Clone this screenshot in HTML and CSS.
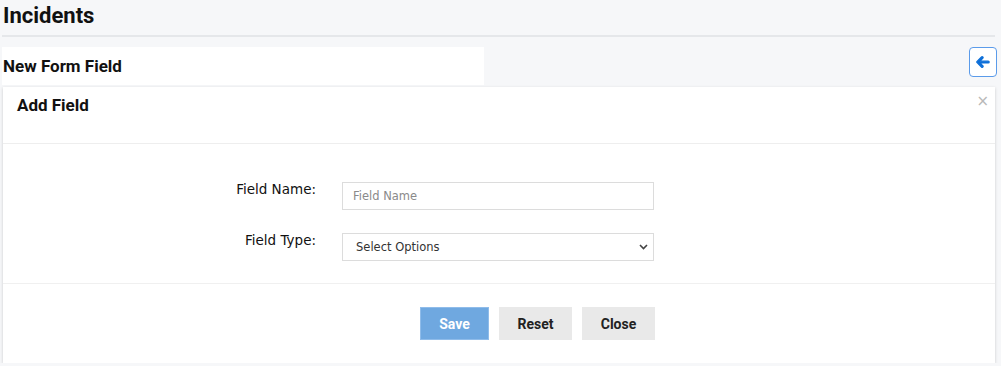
FILE: index.html
```html
<!DOCTYPE html>
<html lang="en">
<head>
    <meta charset="UTF-8">
    <meta name="viewport" content="width=device-width, initial-scale=1.0">
    <title>Incidents</title>
    <link rel="stylesheet" href="styles.css">
</head>
<body>
    <div class="page">
        <h1 class="page-title">Incidents</h1>
        <div class="toolbar">
            <div class="title-box">New Form Field</div>
            <button class="back-btn" title="Back">
                <svg width="14" height="14" viewBox="0 0 448 512"><path fill="#0d6fd8" stroke="#0d6fd8" stroke-width="50" stroke-linejoin="round" d="M9.4 233.4c-12.5 12.5-12.5 32.8 0 45.3l160 160c12.5 12.5 32.8 12.5 45.3 0s12.5-32.8 0-45.3L109.2 288H416c17.7 0 32-14.3 32-32s-14.3-32-32-32H109.3L214.6 118.6c12.5-12.5 12.5-32.8 0-45.3s-32.8-12.5-45.3 0l-160 160z"/></svg>
            </button>
        </div>
        <div class="card">
            <div class="card-header">
                <h2>Add Field</h2>
                <span class="close-x">&times;</span>
            </div>
            <div class="card-body">
                <div class="form-row">
                    <label class="form-label">Field Name:</label>
                    <input class="form-input" type="text" placeholder="Field Name">
                </div>
                <div class="form-row">
                    <label class="form-label">Field Type:</label>
                    <div class="select-wrap">
                        <select class="form-input form-select">
                            <option>Select Options</option>
                        </select>
                        <svg class="chevron" width="9" height="6" viewBox="0 0 9 6"><path d="M1 1l3.5 3.5L8 1" fill="none" stroke="#444" stroke-width="1.6"/></svg>
                    </div>
                </div>
            </div>
            <div class="card-footer">
                <button class="btn btn-save">Save</button>
                <button class="btn btn-grey">Reset</button>
                <button class="btn btn-grey">Close</button>
            </div>
        </div>
    </div>
</body>
</html>
```

FILE: styles.css
```css
body { margin: 0; background: #f6f7f9; font-family: Roboto, "Liberation Sans", sans-serif; color: #111; }
.page { padding: 0 6px 0 2px; }
.page-title { margin: 0; padding: 2px 0 0 1px; font-size: 22px; font-weight: 700; line-height: 28px; height: 33px; border-bottom: 2px solid #e5e7ea; }
.toolbar { display: flex; justify-content: space-between; align-items: flex-start; margin-top: 10px; }
.title-box { background: #fff; width: 482px; height: 38px; padding-left: 1px; font-size: 17px; font-weight: 700; line-height: 38px; box-sizing: border-box; }
.back-btn { width: 28px; height: 30px; margin-right: -2px; background: #fff; border: 1px solid #5b9bea; border-radius: 4px; display: flex; align-items: center; justify-content: center; padding: 0; cursor: pointer; }
.card { background: #fff; margin: 2px 0 0 1px; box-shadow: 0 1px 3px rgba(0,0,0,0.18); }
.card-header { position: relative; height: 57px; border-bottom: 1px solid #eeeeee; box-sizing: border-box; padding: 8px 14px; }
.card-header h2 { margin: 0; font-size: 17px; font-weight: 700; line-height: 20px; }
.close-x { position: absolute; right: 6px; top: 5px; color: #b8b8b8; font-size: 15px; font-family: "DejaVu Sans", sans-serif; }
.card-body { height: 140px; box-sizing: border-box; padding-top: 38px; border-bottom: 1px solid #f0f0f0; }
.form-row { display: flex; align-items: flex-start; margin-bottom: 23px; }
.form-label { width: 339px; text-align: right; padding-right: 26px; box-sizing: border-box; font-family: "DejaVu Sans", sans-serif; font-size: 13.5px; color: #111; margin-top: -1px; }
.form-input { width: 312px; height: 28px; box-sizing: border-box; border: 1px solid #dcdcdc; border-radius: 0; padding: 0 10px; font-family: "DejaVu Sans", sans-serif; font-size: 11.5px; color: #333; background: #fff; outline: none; }
.form-input::placeholder { color: #8a8a8a; }
.select-wrap { position: relative; }
.form-select { appearance: none; padding-left: 13px; font-size: 11.5px; color: #333; }
.chevron { position: absolute; right: 6px; top: 11px; }
.card-footer { display: flex; gap: 10px; padding: 23px 0 23px 417px; }
.btn { height: 33px; border: 1px solid transparent; font-family: Roboto, "Liberation Sans", sans-serif; font-size: 14px; font-weight: 700; cursor: pointer; }
.btn-save { width: 69px; background: #6fa8e0; border-color: #8fbcea; color: #fff; }
.btn-grey { width: 73px; background: #e9e9e9; color: #222; }
```
